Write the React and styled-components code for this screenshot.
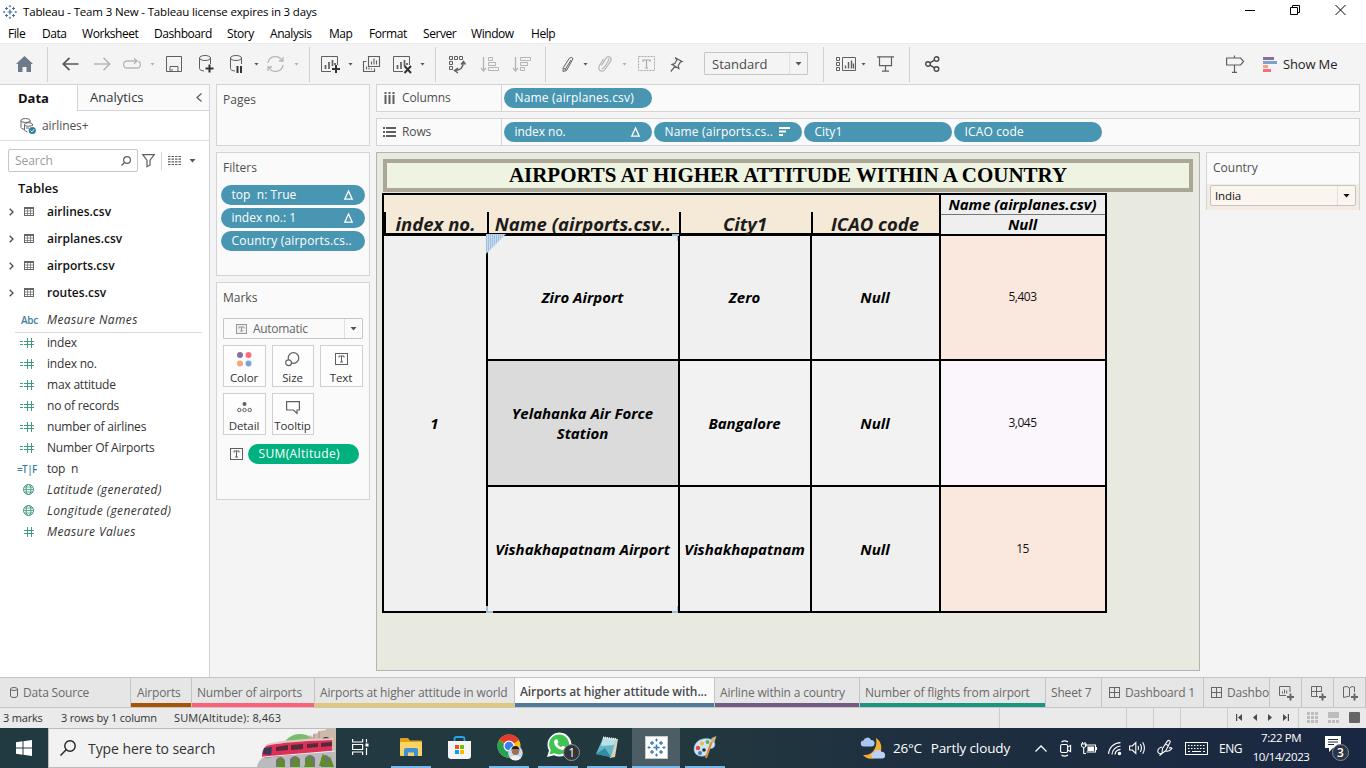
import React from "react";
import styled, { createGlobalStyle, css } from "styled-components";

const UI = `"Open Sans", "Noto Sans", sans-serif`;

const Global = createGlobalStyle`
  *, *::before, *::after { box-sizing: border-box; }
  body { margin: 0; background: #f4f4f4; overflow: hidden; }
  svg { display: block; flex: none; overflow: visible; }
`;

const Window = styled.div`
  width: 1366px;
  height: 768px;
  display: flex;
  flex-direction: column;
  overflow: hidden;
  background: #f4f4f4;
  font-family: ${UI};
  font-size: 12px;
  letter-spacing: -0.2px;
  color: #333;
  white-space: pre;
`;

/* ---------- title and menu ---------- */
const TitleBar = styled.div`
  height: 22px;
  display: flex;
  align-items: center;
  padding: 1px 20px 0 3px;
  background: #fff;
  color: #000;
  font-size: 11.5px;
  letter-spacing: -0.16px;
`;
const TitleText = styled.span`
  flex: 1;
  margin-left: 6px;
`;
const WindowButtons = styled.div`
  display: flex;
  align-items: center;
  gap: 35px;
  margin-top: -3px;
`;
const MenuBar = styled.div`
  height: 21px;
  display: flex;
  align-items: center;
  padding-left: 8px;
  padding-top: 2px;
  background: #fff;
  color: #000;
  font-size: 12px;
  letter-spacing: -0.44px;
`;
const MenuItem = styled.span`
  flex: none;
  width: ${(p) => p.$w}px;
`;

/* ---------- toolbar ---------- */
const Toolbar = styled.div`
  height: 41px;
  display: flex;
  align-items: center;
  border-top: 1px solid #ebebeb;
  background: #f4f4f4;
`;
const Tool = styled.span`
  flex: none;
  display: flex;
  margin-left: ${(p) => p.$gap}px;
`;
const ToolSeparator = styled.span`
  flex: none;
  width: 1px;
  height: 35px;
  margin-left: ${(p) => p.$gap}px;
  background: #d0d0d0;
`;
const Caret = styled.span`
  flex: none;
  width: ${(p) => p.$w || 5}px;
  height: ${(p) => (p.$w ? 4 : 3)}px;
  margin-left: ${(p) => p.$gap || 0}px;
  clip-path: polygon(0 0, 100% 0, 50% 100%);
  background: ${(p) => p.$c || "#555"};
`;
const FitSelect = styled.div`
  flex: none;
  display: flex;
  align-items: center;
  width: 104px;
  height: 23px;
  margin-left: 21px;
  margin-top: -1px;
  padding-left: 7px;
  border: 1px solid #c6c6c6;
  border-radius: 1px;
  font-size: 13px;
  letter-spacing: 0;
  color: #4a4a4a;
`;
const SelectArrow = styled.span`
  display: flex;
  align-items: center;
  justify-content: center;
  align-self: stretch;
  width: ${(p) => p.$w || 18}px;
  margin-left: auto;
  border-left: 1px solid #e0e0e0;
`;
const ShowMe = styled.span`
  margin: -1px 0 0 6px;
  font-size: 13px;
  letter-spacing: -0.15px;
  color: #222;
`;

/* ---------- body ---------- */
const Body = styled.div`
  height: 593px;
  display: flex;
`;
const DataPane = styled.aside`
  width: 210px;
  display: flex;
  flex-direction: column;
  border-right: 1px solid #d4d4d4;
  border-top: 1px solid #d4d4d4;
  background: #fff;
`;
const PaneTabs = styled.div`
  display: flex;
  height: 26px;
`;
const PaneTab = styled.div`
  display: flex;
  align-items: center;
  width: ${(p) => (p.$active ? 77 : 132)}px;
  padding-left: ${(p) => (p.$active ? 18 : 12)}px;
  padding-bottom: 1px;
  font-size: 13px;
  letter-spacing: 0;
  font-weight: ${(p) => (p.$active ? 700 : 400)};
  color: ${(p) => (p.$active ? "#111" : "#333")};
  ${(p) =>
    !p.$active &&
    css`
      background: #fafafa;
      border-left: 1px solid #d4d4d4;
      border-bottom: 1px solid #d4d4d4;
    `}
`;
const Collapse = styled.span`
  margin-left: 52px;
`;
const SourceRow = styled.div`
  display: flex;
  align-items: center;
  height: 30px;
  padding-left: 20px;
  border-bottom: 1px solid #dedede;
  gap: 6px;
  color: #4f4f4f;
  letter-spacing: -0.1px;
`;
const SearchRow = styled.div`
  display: flex;
  align-items: center;
  height: 23px;
  margin: 8px 0 0 8px;
`;
const SearchBox = styled.div`
  display: flex;
  align-items: center;
  justify-content: space-between;
  width: 130px;
  height: 23px;
  padding: 0 6px;
  border: 1px solid #c6c6c6;
  border-radius: 2px;
  color: #9b9b9b;
  letter-spacing: -0.05px;
`;
const TinyRule = styled.span`
  width: 1px;
  height: 18px;
  margin-left: 6px;
  background: #d4d4d4;
`;
const TablesHeading = styled.div`
  height: 26px;
  padding: 7px 0 0 18px;
  font-size: 13px;
  line-height: 18px;
  font-weight: 600;
  letter-spacing: 0;
  color: #111;
`;
const FieldRow = styled.div`
  display: flex;
  align-items: center;
  height: ${(p) => p.$h || 21}px;
  color: #333;
  font-weight: ${(p) => (p.$bold ? 600 : 400)};
  font-style: ${(p) => (p.$italic ? "italic" : "normal")};
  letter-spacing: ${(p) => (p.$bold ? 0 : p.$italic ? 0.4 : -0.2)}px;
  ${(p) => p.$bold && "color:#111;"}
`;
const FieldIcon = styled.span`
  display: flex;
  justify-content: flex-start;
  align-items: center;
  width: 47px;
  padding-left: ${(p) => p.$left}px;
`;
const AbcTag = styled.span`
  font-size: 10px;
  font-weight: 600;
  font-style: normal;
  letter-spacing: -0.3px;
  color: #3b7f9b;
`;
const TFTag = styled.span`
  font-size: 10px;
  font-weight: 600;
  letter-spacing: -0.6px;
  color: #3b7f9b;
`;
const FieldRule = styled.div`
  height: 1px;
  margin: -1px 7px -1px 15px;
  background: #dadada;
`;

/* ---------- cards ---------- */
const CardColumn = styled.div`
  width: 154px;
  margin-left: 6px;
  display: flex;
  flex-direction: column;
  gap: 6px;
`;
const Card = styled.section`
  height: ${(p) => p.$h}px;
  border: 1px solid #d4d4d4;
  background: #fafafa;
`;
const CardTitle = styled.div`
  height: ${(p) => p.$h || 32}px;
  padding: 6px 0 0 6px;
  line-height: 17px;
  letter-spacing: ${(p) => p.$ls || 0}px;
  color: #4f4f4f;
`;
const Pill = styled.div`
  display: flex;
  align-items: center;
  justify-content: space-between;
  width: ${(p) => p.$w}px;
  height: 20px;
  padding: 0 12px 1px 10.5px;
  border-radius: 10px;
  background: ${(p) => p.$c || "#4996b2"};
  color: #fff;
  font-weight: 500;
  letter-spacing: ${(p) => (p.$ls === undefined ? 0.18 : p.$ls)}px;
`;
const PillStack = styled.div`
  display: flex;
  flex-direction: column;
  gap: 3px;
  padding-left: 4px;
`;
const MarkType = styled.div`
  display: flex;
  align-items: center;
  width: 140px;
  height: 21px;
  margin: 3px 0 6px 6px;
  padding-left: 12px;
  gap: 6px;
  border: 1px solid #c6c6c6;
  border-radius: 1px;
  color: #666;
  letter-spacing: -0.3px;
`;
const MarkGrid = styled.div`
  display: grid;
  grid-template-columns: 43px 42px 43px;
  gap: 6px;
  padding-left: 6px;
`;
const MarkButton = styled.div`
  height: 42px;
  display: flex;
  flex-direction: column;
  align-items: center;
  justify-content: space-between;
  padding: 5px 1px 0 0;
  border: 1px solid #d0d0d0;
  background: #fdfdfd;
  font-size: 11.5px;
  line-height: 17px;
  letter-spacing: -0.1px;
`;
const MarkIcon = styled.span`
  height: 16px;
  display: flex;
  align-items: center;
`;
const EncodedField = styled.div`
  display: flex;
  align-items: center;
  gap: 5px;
  margin: 9px 0 0 13px;
`;

/* ---------- shelves and view ---------- */
const Main = styled.main`
  width: 984px;
  margin-left: 6px;
`;
const Shelf = styled.div`
  display: flex;
  align-items: center;
  height: 28px;
  margin-bottom: ${(p) => p.$mb}px;
  border: 1px solid #d4d4d4;
  background: #fafafa;
`;
const ShelfLabel = styled.div`
  display: flex;
  align-items: center;
  gap: 6px;
  width: 125px;
  height: 26px;
  padding: 0 0 1px 6px;
  border-right: 1px solid #d4d4d4;
  color: #4f4f4f;
  letter-spacing: -0.1px;
`;
const ShelfPills = styled.div`
  display: flex;
  gap: 2px;
  margin-left: 2px;
`;
const ViewRow = styled.div`
  display: flex;
  align-items: flex-start;
`;
const View = styled.div`
  width: 824px;
  height: 519px;
  padding: 6px 0 0 5px;
  border: 1px solid #b4b4b4;
  background: #e8e9df;
`;
const SheetTitle = styled.h1`
  width: 810px;
  height: 33px;
  margin: 0 0 1px 1px;
  border: 4px solid #aba797;
  background: #eef3e2;
  color: #000;
  text-align: center;
  font: bold 21px/25px "Liberation Serif", serif;
  letter-spacing: -0.03px;
`;
const Crosstab = styled.div`
  display: grid;
  width: 725px;
  grid-template-columns: 104px 192px 132px 129px 168px;
  grid-template-rows: 43px 125px 126px 126px;
  font: italic 700 15px/20px ${UI};
  letter-spacing: 0;
  color: #000;
`;
const HeaderBand = styled.div`
  grid-column: 1 / 5;
  display: grid;
  grid-template-columns: 103px 192px 132px 1fr;
  align-items: end;
  border: solid #000;
  border-width: 2px 0 3px 2px;
  background: #f5e9d8;
`;
const HeaderCell = styled.div`
  height: 21px;
  padding-right: 2px;
  border-left: 2px solid #000;
  text-align: center;
  font-size: 18.5px;
  line-height: 24px;
  color: #1c1c1c;
`;
const ColumnHeader = styled.div`
  display: flex;
  flex-direction: column;
  border: 2px solid #000;
  background: #efefef;
  text-align: center;
  letter-spacing: -0.05px;
`;
const ColumnHeaderLine = styled.div`
  height: ${(p) => p.$h}px;
  padding-right: 1px;
  line-height: 19px;
  ${(p) => p.$rule && "border-bottom: 1px solid #777;"}
`;
const Cell = styled.div`
  position: relative;
  display: flex;
  align-items: center;
  justify-content: center;
  padding: 0 1px 1px 0;
  border-left: 2px solid #000;
  border-bottom: 2px solid #000;
  background: ${(p) => p.$bg || "#f0f0f0"};
  text-align: center;
  line-height: 20px;
  ${(p) => p.$span && "grid-row: 2 / 5;"}
`;
const ValueCell = styled(Cell)`
  border-right: 2px solid #000;
  font: 12px/16px ${UI};
  letter-spacing: -0.5px;
  color: #111;
`;
const Handle = styled.i`
  position: absolute;
  width: 7px;
  height: 7px;
  border: 0 solid #9fbedb;
  ${(p) =>
    ({
      tr: "top:-2px; right:-1px; border-width:2px 2px 0 0;",
      bl: "bottom:-2px; left:-2px; border-width:0 0 2px 2px;",
      br: "bottom:-2px; right:-1px; border-width:0 2px 2px 0;",
    })[p.$at]}
`;
const Corner = styled.i`
  position: absolute;
  top: -2px;
  left: -2px;
  width: 20px;
  height: 20px;
  clip-path: polygon(0 0, 100% 0, 0 100%);
  background: repeating-linear-gradient(90deg, #9fbedb 0 1px, #c6dcf0 1px 2px);
`;
const CountryCard = styled.section`
  width: 154px;
  height: 58px;
  margin-left: 6px;
  border: 1px solid #d4d4d4;
  background: #fafafa;
`;
const CountryBody = styled.div`
  height: 26px;
  padding: 1px 3px;
  background: #f5ece1;
`;
const CountrySelect = styled.div`
  display: flex;
  align-items: center;
  height: 21px;
  padding-left: 4px;
  border: 1px solid #c4c4c4;
  border-radius: 2px;
  background: #faf5ee;
  font-size: 11.5px;
  letter-spacing: -0.1px;
  color: #111;
`;

/* ---------- sheet tabs, status ---------- */
const TabStrip = styled.div`
  display: flex;
  height: 31px;
  border-top: 1px solid #c4c4c4;
  border-bottom: 1px solid #c6c6c6;
  background: #e6e6e6;
`;
const SheetTab = styled.div`
  flex: none;
  display: flex;
  align-items: center;
  gap: 5px;
  overflow: hidden;
  width: ${(p) => p.$w}px;
  height: 29px;
  padding-left: ${(p) => (p.$pad === undefined ? 6 : p.$pad)}px;
  padding-bottom: ${(p) => (p.$active ? 2 : 0)}px;
  border-right: 1px solid #c4c4c4;
  background: ${(p) => (p.$active ? "#fafafa" : "#e6e6e6")};
  box-shadow: ${(p) => (p.$c ? `inset 0 -4px ${p.$c}` : "none")};
  color: ${(p) => (p.$active ? "#4a4a4a" : "#6a6a6a")};
  font-weight: ${(p) => (p.$active ? 600 : 400)};
  letter-spacing: ${(p) => (p.$active ? -0.1 : -0.17)}px;
`;
const StatusBar = styled.div`
  display: flex;
  height: 20px;
  padding-left: 3px;
  background: #eaeaea;
  font-size: 11px;
  line-height: 20px;
  letter-spacing: -0.2px;
  color: #333;
`;
const StatusText = styled.span`
  width: ${(p) => p.$w}px;
  letter-spacing: ${(p) => p.$ls || -0.2}px;
`;
const StatusCell = styled.div`
  width: ${(p) => p.$w}px;
  display: flex;
  align-items: center;
  border-left: 1px solid #cdcdcd;
  padding: 0 0 2px ${(p) => p.$pad || 0}px;
  gap: ${(p) => p.$gap || 0}px;
`;

/* ---------- taskbar ---------- */
const Taskbar = styled.div`
  display: flex;
  align-items: stretch;
  height: 40px;
  background: linear-gradient(90deg, #213a42 0, #22383f 50%, #1e2f40 68%, #1a2742 100%);
  color: #fff;
`;
const StartButton = styled.div`
  width: 48px;
  padding: 12px 0 0 16px;
`;
const TaskSearch = styled.div`
  display: flex;
  align-items: center;
  width: 288px;
  border: solid #b9bcbd;
  border-width: 1px 0 1px 1px;
  background: #f2f2f2;
  color: #333;
  font-size: 14px;
  letter-spacing: -0.08px;
  overflow: hidden;
`;
const TaskSearchText = styled.span`
  width: 141px;
  margin-left: 12px;
`;
const TaskApp = styled.div`
  flex: none;
  display: flex;
  align-items: center;
  justify-content: center;
  width: ${(p) => p.$w}px;
  margin-left: ${(p) => p.$gap || 0}px;
  background: ${(p) => (p.$active ? "#4c5d65" : "transparent")};
  border-bottom: 2px solid ${(p) => (p.$open ? "#76b9ed" : "transparent")};
`;
const TrayItem = styled.span`
  flex: none;
  display: flex;
  align-items: center;
  margin-left: ${(p) => p.$gap}px;
  font-size: ${(p) => p.$size || 12}px;
  letter-spacing: ${(p) => p.$ls || 0}px;
`;
const Clock = styled.div`
  width: 60px;
  margin-left: 9px;
  text-align: center;
  font-size: 11.5px;
  line-height: 19px;
  letter-spacing: -0.42px;
`;

/* ---------- drawings ---------- */
const Svg = ({ w, h, c = "#5f5f5f", sw = 1, children }) => (
  <svg width={w} height={h} viewBox={`0 0 ${w} ${h}`} fill="none" stroke={c} strokeWidth={sw}>
    {children}
  </svg>
);

const TableauMark = ({ size = 14, c = "#3f6f9a" }) => (
  <svg width={size} height={size} viewBox="0 0 14 14" stroke={c} strokeWidth="1" fill="none">
    <path d="M7 4.6v4.8M4.6 7h4.8" strokeWidth="1.2" />
    <path d="M3.5 2v3M2 3.5h3M10.500 2v3M9 3.500h3M3.500 9v3M2 10.500h3M10.500 9v3M9 10.500h3" />
    <path d="M7 0v2.400M5.800 1.200h2.400M7 11.600v2.400M5.800 12.800h2.400M1.200 5.800v2.400M0 7h2.400M12.800 5.800v2.400M11.600 7h2.400" strokeWidth=".8" />
  </svg>
);

const TextBox = ({ w = 13, h = 12, c = "#5f5f5f", fill = "none" }) => (
  <Svg w={w} h={h} c={c}>
    <rect x=".5" y=".5" width={w - 1} height={h - 1} fill={fill} />
    <path d={`M${w / 2 - 2.500} 4.500v-1.500h5v1.500M${w / 2} 3v${h - 6}M${w / 2 - 1.500} ${h - 3}h3`} />
  </Svg>
);

const Cylinder = ({ children }) => (
  <Svg w={15} h={18}>
    <ellipse cx="6" cy="3" rx="5.500" ry="2.500" />
    <path d="M.5 3v10.500c0 1.500 2 2.200 4.500 2.500M11.500 3v6" />
    {children}
  </Svg>
);

const ChartBox = ({ children, w = 20 }) => (
  <Svg w={w} h={19}>
    <path d="M16.500 10V1.500H.5v15h9.500" />
    <path d="M4.500 14v-4M8 14V7M11.500 11V5M14 10V8" strokeWidth="1.700" />
    {children}
  </Svg>
);

const Delta = () => (
  <Svg w={9} h={10} c="#fff" sw={1.3}>
    <path d="M4.500 1 8.200 9.200H.8Z" />
  </Svg>
);

const Chevron = () => (
  <Svg w={5} h={8} sw={1.3} c="#4a4a4a">
    <path d="M.7.7 4 4 .7 7.300" />
  </Svg>
);

const TableGlyph = () => (
  <Svg w={10} h={9} c="#666">
    <rect x=".5" y=".5" width="9" height="8" />
    <path d="M0 1.500h10" />
    <path d="M0 4h10M0 6.500h10M3.500 2v7M6.500 2v7" strokeWidth=".7" />
  </Svg>
);

const HashGlyph = ({ calc }) => (
  <Svg w={calc ? 15 : 11} h={10} c="#3f9c7c">
    {calc && <path d="M0 3.500h3M0 6.500h3" />}
    <g transform={calc ? "translate(4 0)" : ""}>
      <path d="M3.500 0v10M7.500 0v10M0 3.500h10M0 6.500h10" />
    </g>
  </Svg>
);

const GlobeGlyph = () => (
  <Svg w={11} h={11} c="#3f9c7c">
    <circle cx="5.500" cy="5.500" r="5" />
    <ellipse cx="5.500" cy="5.500" rx="2.400" ry="5" />
    <path d="M.5 5.500h10M1 3h9M1 8h9" strokeWidth=".8" />
  </Svg>
);

const DashGlyph = () => (
  <Svg w={11} h={11} c="#666">
    <rect x=".5" y=".5" width="10" height="10" />
    <path d="M5.500 0v11M0 5.500h11" />
  </Svg>
);

const Train = () => (
  <svg width="80" height="38" viewBox="0 0 80 38">
    <path d="M26 18c5-13 18-17 31-9l5 10z" fill="#76bd6c" />
    <path d="M50 14l4-8 3 2V5l5-1V2l8-1V0h10v38H50z" fill="#cdb9a8" />
    <path d="M58 5v10M63 3v12M54 8v8" stroke="#a99482" />
    <path d="M66 14V12a4 4 0 0 1 8 0v2z" fill="#3f3430" />
    <path d="M1 38c1-7 6-11 15-12l64-6v18z" fill="#b9bbbd" />
    <path d="M20 38V31q4-6 9 0v7zM34 38v-8q5-6 10 0v8zM49 38v-9q5-6 10 0v9zM65 38v-9q4-6 9 0v9z" fill="#6d7672" />
    <path d="M25 27l4 11h-8zM40 27l4 11h-8zM53 26l5 12H48zM67 24l4 13h-8zM74 27l4 11h-7z" fill="#5d8f22" />
    <path d="M6 27c0-7 3-11 10-12l60-5v12l-59 6c-7 1-11 1-11-1z" fill="#dc3155" />
    <path d="M11 15c15-4 35-5 66-6v2c-28 1-50 2-68 6z" fill="#e8c3ca" />
    <path d="M8 19l8-1-1 8-8-1z" fill="#2f3b58" />
    <path d="M20 18l12-2v5l-12 1zM35 16l12-1v5l-12 1zM51 15l11-1v4l-11 1zM65 14l11-1v4l-11 1z" fill="#56283c" />
    <path d="M7 28l72-6" stroke="#eef0f2" />
  </svg>
);

const TaskView = () => (
  <Svg w={17} h={16} c="#fff" sw={1.200}>
    <path d="M.6 0v3h10V0M.6 16v-3h10v3M.6 5.500h10v5H.6zM14.500 0v3.500M14.500 9v7" />
    <rect x="13.500" y="4.500" width="3" height="3" fill="#fff" stroke="none" />
  </Svg>
);

const Folder = () => (
  <svg width="22" height="19" viewBox="0 0 22 19">
    <path d="M0 1q0-1 1-1h7l2 2.500h11q1 0 1 1V17H0z" fill="#dfa318" />
    <rect y="4" width="22" height="14" rx=".8" fill="#fbd364" />
    <path d="M4 18v-6q0-2 2-2h10q2 0 2 2v6h-4v-3.500H8V18z" fill="#3b93d6" />
  </svg>
);

const Store = () => (
  <svg width="23" height="23" viewBox="0 0 23 23">
    <path d="M6.500 6V3q0-2 2-2h6q2 0 2 2v3" fill="none" stroke="#26a5e4" strokeWidth="1.800" />
    <path d="M0 5h23v15q0 3-3 3H3q-3 0-3-3z" fill="#f4f4f4" />
    <path d="M7 9h4v4H7z" fill="#f25022" />
    <path d="M12 9h4v4h-4z" fill="#7fba00" />
    <path d="M7 14h4v4H7z" fill="#00a4ef" />
    <path d="M12 14h4v4h-4z" fill="#ffb900" />
  </svg>
);

const Chrome = () => (
  <svg width="26" height="27" viewBox="0 0 26 27">
    <circle cx="12" cy="12" r="11.500" fill="#fbc116" />
    <path d="M2 6.200A11.500 11.500 0 0 1 22 6.200L12 7z" fill="#e33b2e" />
    <path d="M2 6.200A11.500 11.500 0 0 0 12 23.500L16 16z" fill="#23a455" />
    <path d="M2 6.200h20L12 12z" fill="#e33b2e" />
    <circle cx="12" cy="12" r="5.500" fill="#fff" />
    <circle cx="12" cy="12" r="4.300" fill="#3b7ded" />
    <circle cx="18.500" cy="19" r="7.300" fill="#c9dcea" />
    <path d="M13 24q5.500-5 11 0a7.300 7.300 0 0 1-11 0z" fill="#f0f1f3" />
    <circle cx="18.500" cy="17.500" r="3.600" fill="#a36e50" />
    <path d="M14.500 17q0-5 4-5t4 5l-1-2h-6z" fill="#251c1a" />
  </svg>
);

const WhatsApp = () => (
  <svg width="33" height="28" viewBox="0 0 33 28">
    <path d="M0 24l2-6.500A12 12 0 1 1 7 22.300z" fill="#fff" />
    <path d="M2.500 21.500l1.300-4.500A10 10 0 1 1 7.500 20.300z" fill="#3fc351" />
    <path d="M8.200 6.500l2-.3 1.300 3-1.200 1.600q1.300 2.500 4 3.500l1.400-1.600 2.800 1.400q0 3-3.500 3-7-1.500-8-7.600-.1-2 1.200-3z" fill="#fff" />
    <circle cx="24.500" cy="19.500" r="8" fill="#30363a" stroke="#8f9799" />
    <text x="24.500" y="24" textAnchor="middle" fontFamily="Open Sans, sans-serif" fontSize="12" fill="#fff">1</text>
  </svg>
);

const Notepad = () => (
  <svg width="23" height="23" viewBox="0 0 23 23">
    <path d="M7 1l15 2-3 18-5 1z" fill="#d7d2ba" />
    <path d="M7 2l13 1-5 18-15-3z" fill="#67b6c8" />
    <path d="M7 2l13 1-2 6-13 1z" fill="#b7e0e7" />
    <path d="M0 18l9-6 6 9z" fill="#2f8da6" />
    <path d="M7 1.500l13 1.500" stroke="#e8eff0" strokeWidth="2" strokeDasharray="1 1" />
  </svg>
);

const Paint = () => (
  <svg width="24" height="24" viewBox="0 0 24 24">
    <path d="M1 14C1 6 10 2 17 4c6 2 6 7 3 9-2 1-4 0-5 2s1 5-4 6C5 22 1 19 1 14z" fill="#cfe3f2" stroke="#7baed2" strokeWidth=".6" />
    <circle cx="5" cy="13" r="2.200" fill="#e2483e" />
    <circle cx="9" cy="8.500" r="2" fill="#eebc35" />
    <circle cx="14.500" cy="7" r="1.900" fill="#61af4c" />
    <circle cx="11" cy="15" r="1.800" fill="#233" />
    <circle cx="7" cy="18" r="2" fill="#3b7ec8" />
    <path d="M13 23 18.500 7" stroke="#dd8933" strokeWidth="2.200" />
    <path d="M18 8l.5-5 5-2-2 6z" fill="#cbb08a" />
  </svg>
);

const Weather = () => (
  <svg width="25" height="23" viewBox="0 0 25 23">
    <path d="M15 1c7 4 7 15 1 19-5 3-11 2-14-2 9 1 15-7 13-17z" fill="#f6ae31" />
    <path d="M3 9.500a3 3 0 0 1-.5-6 4 4 0 0 1 7.500-.5 3.300 3.300 0 0 1 1 6.500z" fill="#a9c5f2" />
    <path d="M13.500 21.500a3 3 0 0 1-.5-6 4.200 4.200 0 0 1 7.500-.7 3.400 3.400 0 0 1 1 6.700z" fill="#b9d0f7" />
  </svg>
);

/* ---------- data ---------- */
const MENU = [["File", 34], ["Data", 40], ["Worksheet", 72], ["Dashboard", 73], ["Story", 43], ["Analysis", 59], ["Map", 40], ["Format", 54], ["Server", 48], ["Window", 60], ["Help", 30]];
const TABLES = ["airlines.csv", "airplanes.csv", "airports.csv", "routes.csv"];
const CALCS = ["index", "index no.", "max attitude", "no of records", "number of airlines", "Number Of Airports"];
const AIRPORTS = [
  { name: "Ziro Airport", city: "Zero", value: "5,403", tint: "#fae8df" },
  { name: "Yelahanka Air Force\nStation", city: "Bangalore", value: "3,045", tint: "#fbf6fb", selected: true },
  { name: "Vishakhapatnam Airport", city: "Vishakhapatnam", value: "15", tint: "#fae8df" },
];
const GREY = "#b5b5b5";

function MainToolbar() {
  return (
    <Toolbar>
      <Tool $gap={16}><Svg w={17} h={16} c="none"><path d="M8.500 0 17 8h-2v8h-4.500v-5h-4v5H2V8H0z" fill="#6c7a89" /></Svg></Tool>
      <ToolSeparator $gap={14} />
      <Tool $gap={14}><Svg w={17} h={14} sw={1.700} c="#555"><path d="M16.500 7H1.500M7.500.8 1.300 7l6.200 6.200" /></Svg></Tool>
      <Tool $gap={15}><Svg w={17} h={14} sw={1.500} c={GREY}><path d="M0 7h15.500M9.500.8 15.700 7l-6.200 6.200" /></Svg></Tool>
      <Tool $gap={12}><Svg w={18} h={12} sw={1.300} c={GREY}><path d="M7 3H4Q.6 3 .6 6.500T4 10h10q3.400 0 3.400-3.500 0-2.500-2-3.300M7 3h7M11 .3 14 3l-3 2.800" /></Svg></Tool>
      <Caret $gap={9} $c="#b0b0b0" />
      <Tool $gap={11}><Svg w={16} h={16}><path d="M.5.5h15v15H.5zM4 15.500v-5h8v5M6 15v-2" /></Svg></Tool>
      <Tool $gap={17}><Cylinder><path d="M10.500 9.500v8M6.500 13.500h8" strokeWidth="2" stroke="#333" /></Cylinder></Tool>
      <Tool $gap={16}><Cylinder><path d="M7.500 11v7M11 11v7" strokeWidth="2" stroke="#333" /></Cylinder></Tool>
      <Caret $gap={9} />
      <Tool $gap={8}><Svg w={17} h={16} sw={1.300} c={GREY}><path d="M1 7A7.500 7.500 0 0 1 15 4.500M16 9A7.500 7.500 0 0 1 2 11.500M16 1v4h-4M1 15v-4h4" /></Svg></Tool>
      <Caret $gap={10} $c="#b0b0b0" />
      <ToolSeparator $gap={10} />
      <Tool $gap={11}><ChartBox><path d="M15 10v8M11 14h8" strokeWidth="2" stroke="#333" /></ChartBox></Tool>
      <Caret $gap={7} />
      <Tool $gap={10}><Svg w={17} h={16}><path d="M5.500.5h11v10h-11zM3.500 5.500H.5v10h11v-3M8.500 8.500v-3M11 8.500v-6M13.500 8.500v-4M3.500 13.500v-3M6 13.500v-2M8.500 13.500v-1" strokeWidth="1.100" /></Svg></Tool>
      <Tool $gap={13}><ChartBox><path d="m11.500 11 6.500 7M18 11l-6.500 7" strokeWidth="2" stroke="#333" /></ChartBox></Tool>
      <Caret $gap={7} />
      <ToolSeparator $gap={10} />
      <Tool $gap={13}><Svg w={17} h={17}><path d="M.5.5h3v3h-3zM5.500.5h3v3h-3zM10.500.5h3v3h-3zM.5 5.500h3v3h-3zM.5 10.500h3v3h-3z" /><path d="M6 14.500q8 0 8.500-8.500M12 8.500l2.500-3 2 3M9 12l-3.500 2.500L9 17" strokeWidth="1.400" /></Svg></Tool>
      <Tool $gap={15}><Svg w={18} h={15} c={GREY}><path d="M2.500 0v14M0 11l2.500 3L5 11" strokeWidth="1.300" /><path d="M7.500.5h4v3h-4zM7.500 5.500h7v3h-7zM7.500 10.500h10v3h-10z" /></Svg></Tool>
      <Tool $gap={14}><Svg w={18} h={15} c={GREY}><path d="M2.500 0v14M0 11l2.500 3L5 11" strokeWidth="1.300" /><path d="M7.500.5h10v3h-10zM7.500 5.500h7v3h-7zM7.500 10.500h4v3h-4z" /></Svg></Tool>
      <ToolSeparator $gap={14} />
      <Tool $gap={16}><Svg w={12} h={15}><path d="M7.500 1q2-1.500 3.500.7L4.500 13.500 1 14.500l.2-3.700zM1.500 11l3 2M9 3 3.200 12.500" /></Svg></Tool>
      <Caret $gap={9} />
      <Tool $gap={10}><Svg w={14} h={16} c={GREY} sw={1.200}><path d="M3.500 9.500 8 2.200q2-2.500 4-1t.6 4L7 13.500q-2 2.500-4.500 1.200T1.300 10L5.500 3M3.800 12q1.500 1 2.600-.8L10.500 4.500q.6-1.500-.5-2" /></Svg></Tool>
      <Caret $gap={10} $c="#b0b0b0" />
      <Tool $gap={11}><Svg w={17} h={16} c="#a8a8a8"><rect x=".5" y=".5" width="16" height="14" strokeDasharray="2 1" /><path d="M5 6V4h7v2M8.500 4v8M7 12h3" strokeWidth="1.200" /></Svg></Tool>
      <Tool $gap={15}><Svg w={13} h={15} sw={1.200}><path d="M5.200.7 12 4.600l-1.500.3-2.300 3.800.7 2.700L2 7.400l2.700-.7L7 2.900zM5 9.300.8 14.500" /></Svg></Tool>
      <FitSelect>Standard<SelectArrow><Caret $w={7} /></SelectArrow></FitSelect>
      <ToolSeparator $gap={15} />
      <Tool $gap={12}><Svg w={20} h={14}><path d="M.5.500h3v3h-3zM.5 5.500h3v3h-3zM.5 10.500h3v3h-3zM6.500.5h13v13h-13z" /><path d="M9.500 11.500v-3M12.500 11.500V5M15.500 11.500V3.500M17.500 11.500v-5" strokeWidth="1.400" /></Svg></Tool>
      <Caret $gap={5} />
      <Tool $gap={11}><Svg w={17} h={16} sw={1.200}><path d="M0 .8h17M2.500 1v8.700h12V1M8.500 10v5M5 15.200h7" /></Svg></Tool>
      <ToolSeparator $gap={15} />
      <Tool $gap={15}><Svg w={15} h={16} sw={1.400} c="#4a4a4a"><circle cx="3" cy="8" r="2.300" /><circle cx="11.500" cy="3" r="2.300" /><circle cx="11.500" cy="13" r="2.300" /><path d="m5 6.800 4.500-2.600M5 9.200l4.500 2.600" /></Svg></Tool>
      <Tool $gap={286}><Svg w={18} h={18} sw={1.200}><path d="M.6 3h14l3 3.500-3 3.500H.6zM8.500.5V3M8.500 10v7.400M6 17.400h5" /></Svg></Tool>
      <Tool $gap={19}><Svg w={14} h={15} c="none"><path d="M0 0h11v3H0z" fill="#8a6f98" /><path d="M0 4h14v3H0z" fill="#7ba3d0" /><path d="M0 8h5v3H0z" fill="#f4a478" /><path d="M0 12h8v3H0z" fill="#fb6b80" /></Svg></Tool>
      <ShowMe>Show Me</ShowMe>
    </Toolbar>
  );
}

function DataPanel() {
  return (
    <DataPane>
      <PaneTabs>
        <PaneTab $active>Data</PaneTab>
        <PaneTab>
          Analytics
          <Collapse><Svg w={6} h={9} sw={1.300}><path d="M5.500.5 1 4.500l4.500 4" /></Svg></Collapse>
        </PaneTab>
      </PaneTabs>
      <SourceRow>
        <Svg w={16} h={16} c="#666">
          <ellipse cx="5.500" cy="2.500" rx="4.500" ry="2" />
          <path d="M1 2.500v7q.5 1.500 3 1.800M10 2.500v2" />
          <ellipse cx="8.500" cy="6.500" rx="4" ry="1.800" />
          <path d="M4.500 6.500v5.500q.5 1.500 3 2M12.500 6.500V8M6 10h3" />
          <circle cx="12.300" cy="12.500" r="3.600" fill="#2f7f9e" stroke="none" />
          <path d="m10.600 12.600 1.300 1.300 2.200-2.600" stroke="#fff" />
        </Svg>
        airlines+
      </SourceRow>
      <SearchRow>
        <SearchBox>
          Search
          <Svg w={10} h={10} sw={1.200}><circle cx="6" cy="4" r="3.400" /><path d="M3.500 6.500.5 9.500" /></Svg>
        </SearchBox>
        <Tool $gap={4}><Svg w={13} h={13} sw={1.200}><path d="M.7.700h11.600L8 6.200V11l-3 1.700V6.200z" /></Svg></Tool>
        <TinyRule />
        <Tool $gap={6}><Svg w={13} h={9}><path d="M0 .5h13M0 3.200h13M0 5.900h13M0 8.500h13" strokeWidth="1.200" strokeDasharray="2.500 1" /></Svg></Tool>
        <Caret $gap={8} $w={7} />
      </SearchRow>
      <TablesHeading>Tables</TablesHeading>
      {TABLES.map((t) => (
        <FieldRow key={t} $bold $h={27}>
          <FieldIcon $left={9}><Chevron /><Tool $gap={10}><TableGlyph /></Tool></FieldIcon>
          {t}
        </FieldRow>
      ))}
      <FieldRow $italic $h={27}><FieldIcon $left={21}><AbcTag>Abc</AbcTag></FieldIcon>Measure Names</FieldRow>
      <FieldRule />
      {CALCS.map((f) => (
        <FieldRow key={f}><FieldIcon $left={20}><HashGlyph calc /></FieldIcon>{f}</FieldRow>
      ))}
      <FieldRow><FieldIcon $left={17}><TFTag>=T|F</TFTag></FieldIcon>top  n</FieldRow>
      <FieldRow $italic><FieldIcon $left={23}><GlobeGlyph /></FieldIcon>Latitude (generated)</FieldRow>
      <FieldRow $italic><FieldIcon $left={23}><GlobeGlyph /></FieldIcon>Longitude (generated)</FieldRow>
      <FieldRow $italic><FieldIcon $left={24}><HashGlyph /></FieldIcon>Measure Values</FieldRow>
    </DataPane>
  );
}

function Cards() {
  return (
    <CardColumn>
      <Card $h={62}><CardTitle>Pages</CardTitle></Card>
      <Card $h={124}>
        <CardTitle>Filters</CardTitle>
        <PillStack>
          <Pill $w={144} $ls={0.05}>top  n: True<Delta /></Pill>
          <Pill $w={144} $ls={-0.02}>index no.: 1<Delta /></Pill>
          <Pill $w={144}>Country (airports.cs..</Pill>
        </PillStack>
      </Card>
      <Card $h={218}>
        <CardTitle>Marks</CardTitle>
        <MarkType>
          <TextBox w={11} h={10} c="#999" fill="#eee" />Automatic
          <SelectArrow><Caret $w={7} /></SelectArrow>
        </MarkType>
        <MarkGrid>
          <MarkButton>
            <MarkIcon><Svg w={15} h={15} c="none"><circle cx="3" cy="3" r="3" fill="#85719a" /><circle cx="11.500" cy="3" r="3" fill="#fb6b80" /><circle cx="3" cy="11.500" r="3" fill="#f4a478" /><circle cx="11.500" cy="11.500" r="3" fill="#7ba3d0" /></Svg></MarkIcon>Color
          </MarkButton>
          <MarkButton>
            <MarkIcon><Svg w={15} h={15} sw={1.200}><circle cx="8.500" cy="6" r="5.300" /><circle cx="3.600" cy="10.700" r="2.900" fill="#fdfdfd" /></Svg></MarkIcon>Size
          </MarkButton>
          <MarkButton><MarkIcon><TextBox /></MarkIcon>Text</MarkButton>
          <MarkButton>
            <MarkIcon><Svg w={15} h={12}><circle cx="7.500" cy="3" r="2" fill="#5f5f5f" stroke="none" /><circle cx="2.300" cy="9" r="1.700" /><circle cx="7.500" cy="9" r="1.700" /><circle cx="12.700" cy="9" r="1.700" /></Svg></MarkIcon>Detail
          </MarkButton>
          <MarkButton>
            <MarkIcon><Svg w={14} h={13} sw={1.200}><path d="M.6.600h12.800v8.400H11v3.400L7.500 9H.6z" /></Svg></MarkIcon>Tooltip
          </MarkButton>
        </MarkGrid>
        <EncodedField><TextBox /><Pill $w={111} $c="#00b180" $ls={0.35}>SUM(Altitude)</Pill></EncodedField>
      </Card>
    </CardColumn>
  );
}

function SheetView() {
  return (
    <View>
      <SheetTitle>AIRPORTS AT HIGHER ATTITUDE WITHIN A COUNTRY</SheetTitle>
      <Crosstab>
        <HeaderBand>
          <HeaderCell>index no.</HeaderCell>
          <HeaderCell>Name (airports.csv..</HeaderCell>
          <HeaderCell>City1</HeaderCell>
          <HeaderCell>ICAO code</HeaderCell>
        </HeaderBand>
        <ColumnHeader>
          <ColumnHeaderLine $h={20} $rule>Name (airplanes.csv)</ColumnHeaderLine>
          <ColumnHeaderLine $h={19}>Null</ColumnHeaderLine>
        </ColumnHeader>
        <Cell $span>1</Cell>
        {AIRPORTS.map((a, i) => (
          <React.Fragment key={a.name}>
            <Cell $bg={a.selected ? "#dbdbdb" : undefined}>
              {i === 0 && <><Corner /><Handle $at="tr" /></>}
              {i === 2 && <><Handle $at="bl" /><Handle $at="br" /></>}
              {a.name}
            </Cell>
            <Cell $bg={a.selected ? "#f2f2f2" : undefined}>{a.city}</Cell>
            <Cell $bg={a.selected ? "#f2f2f2" : undefined}>Null</Cell>
            <ValueCell $bg={a.tint}>{a.value}</ValueCell>
          </React.Fragment>
        ))}
      </Crosstab>
    </View>
  );
}

function Workspace() {
  return (
    <Main>
      <Shelf $mb={6}>
        <ShelfLabel>
          <Svg w={13} h={12} sw={2}><path d="M2.500 0v2M6.500 0v2M10.500 0v2M2.500 3v9M6.500 3v9M10.500 3v9" /></Svg>Columns
        </ShelfLabel>
        <ShelfPills><Pill $w={148}>Name (airplanes.csv)</Pill></ShelfPills>
      </Shelf>
      <Shelf $mb={6}>
        <ShelfLabel>
          <Svg w={13} h={10} sw={2}><path d="M0 1h2M0 5h2M0 9h2M3 1h10M3 5h10M3 9h10" /></Svg>Rows
        </ShelfLabel>
        <ShelfPills>
          <Pill $w={148} $ls={-0.05}>index no.<Delta /></Pill>
          <Pill $w={148}>Name (airports.cs..<Svg w={11} h={9} c="#fff" sw={1.800}><path d="M0 1h11M0 4.500h7M0 8h4" /></Svg></Pill>
          <Pill $w={148} $ls={0}>City1</Pill>
          <Pill $w={148} $ls={0.15}>ICAO code</Pill>
        </ShelfPills>
      </Shelf>
      <ViewRow>
        <SheetView />
        <CountryCard>
          <CardTitle $h={31}>Country</CardTitle>
          <CountryBody><CountrySelect>India<SelectArrow><Caret $w={7} $c="#111" /></SelectArrow></CountrySelect></CountryBody>
        </CountryCard>
      </ViewRow>
    </Main>
  );
}

function Tabs() {
  const plus = <path d="M11.500 7.500v7M8 11h7" strokeWidth="2" />;
  return (
    <TabStrip>
      <SheetTab $w={131} $pad={10}>
        <Svg w={8} h={11} c="#666"><ellipse cx="4" cy="2" rx="3.500" ry="1.500" /><path d="M.5 2v7q0 1.500 3.500 1.500T7.500 9V2" /></Svg>{" "}Data Source
      </SheetTab>
      <SheetTab $w={61} $c="#a85204">Airports</SheetTab>
      <SheetTab $w={123} $c="#fc6179" $pad={5}>Number of airports</SheetTab>
      <SheetTab $w={200} $c="#dfc777" $pad={5}>Airports at higher attitude in world</SheetTab>
      <SheetTab $w={200} $c="#50799c" $pad={5} $active>Airports at higher attitude with...</SheetTab>
      <SheetTab $w={145} $c="#735a82" $pad={5}>Airline within a country</SheetTab>
      <SheetTab $w={186} $c="#1a9580" $pad={5}>Number of flights from airport</SheetTab>
      <SheetTab $w={56} $pad={5}>Sheet 7</SheetTab>
      <SheetTab $w={102} $pad={7}><DashGlyph />Dashboard 1</SheetTab>
      <SheetTab $w={66} $pad={7}><DashGlyph />Dashbo</SheetTab>
      <SheetTab $w={32} $pad={9}><Svg w={15} h={14} c="#666"><path d="M7 9.500H.5v-9h10.500V6M3.500 7.500v-2M5.500 7.500v-4M7.700 7.500v-3" />{plus}</Svg></SheetTab>
      <SheetTab $w={32} $pad={9}><Svg w={15} h={14} c="#666"><path d="M7 10.500H.5V.5h10V6M5.500.5v10M.5 5.500h10" />{plus}</Svg></SheetTab>
      <SheetTab $w={32} $pad={9}><Svg w={15} h={14} c="#666"><path d="M7 10 .5 11.500V1L4 .5 6.500 2 9 .5l2.500.5v5M6.500 2v8" />{plus}</Svg></SheetTab>
    </TabStrip>
  );
}

function Status() {
  return (
    <StatusBar>
      <StatusText $w={58}>3 marks</StatusText>
      <StatusText $w={113}>3 rows by 1 column</StatusText>
      <StatusText $w={825} $ls={0.15}>SUM(Altitude): 8,463</StatusText>
      <StatusCell $w={127} />
      <StatusCell $w={27} />
      <StatusCell $w={27} />
      <StatusCell $w={47} />
      <StatusCell $w={71} $pad={8} $gap={11}>
        <Svg w={6} h={7} c="none"><path d="M0 0h1.200v7H0zM6 0v7L2 3.500z" fill="#4a4a4a" /></Svg>
        <Svg w={4} h={7} c="none"><path d="M4 0v7L0 3.500z" fill="#4a4a4a" /></Svg>
        <Svg w={4} h={7} c="none"><path d="M0 0v7l4-3.500z" fill="#4a4a4a" /></Svg>
        <Svg w={6} h={7} c="none"><path d="M6 0H4.800v7H6zM0 0v7l4-3.500z" fill="#4a4a4a" /></Svg>
      </StatusCell>
      <StatusCell $w={68} $pad={8} $gap={10}>
        <Svg w={11} h={11} c="none"><path d="M0 0h3v3H0zM4 0h3v3H4zM8 0h3v3H8zM0 4h3v3H0zM4 4h3v3H4zM8 4h3v3H8zM0 8h3v3H0zM4 8h3v3H4zM8 8h3v3H8z" fill="#bdbdbd" /></Svg>
        <Svg w={11} h={11} c="none"><path d="M0 0h11v6H0zM0 8h3v3H0zM4 8h3v3H4zM8 8h3v3H8z" fill="#bdbdbd" /></Svg>
        <Svg w={11} h={11} c="none"><rect width="11" height="11" rx="1" fill="#666" /></Svg>
      </StatusCell>
    </StatusBar>
  );
}

function Task() {
  return (
    <Taskbar>
      <StartButton><Svg w={16} h={16} c="none"><path d="M0 2.300 6.500 1.300v6.200H0zM7.500 1.200 16 0v7.500H7.500zM0 8.500h6.500v6.200L0 13.700zM7.500 8.500H16V16l-8.500-1.200z" fill="#fff" /></Svg></StartButton>
      <TaskSearch>
        <Tool $gap={11}><Svg w={16} h={16} sw={1.400} c="#222"><circle cx="10" cy="6" r="5.200" /><path d="M6.200 9.800.5 15.500" /></Svg></Tool>
        <TaskSearchText>Type here to search</TaskSearchText>
        <Tool $gap={27}><Train /></Tool>
      </TaskSearch>
      <TaskApp $w={48}><TaskView /></TaskApp>
      <TaskApp $w={40} $gap={7} $open><Folder /></TaskApp>
      <TaskApp $w={40} $gap={8}><Store /></TaskApp>
      <TaskApp $w={40} $gap={10} $open><Tool $gap={2}><Chrome /></Tool></TaskApp>
      <TaskApp $w={40} $gap={9} $open><Tool $gap={11}><WhatsApp /></Tool></TaskApp>
      <TaskApp $w={40} $gap={9} $open><Notepad /></TaskApp>
      <TaskApp $w={48} $gap={5} $open $active>
        <svg width="23" height="23" viewBox="0 0 23 23"><rect x=".5" y=".5" width="22" height="22" fill="#fff" stroke="#c9c9c9" /><g transform="translate(2.500 2.500)"><TableauMark size={18} c="#3e7cab" /></g></svg>
      </TaskApp>
      <TaskApp $w={40} $gap={5} $open><Paint /></TaskApp>
      <TrayItem $gap={136}><Weather /></TrayItem>
      <TrayItem $gap={7} $size={13.5} $ls={-0.25}>26°C</TrayItem>
      <TrayItem $gap={9} $size={13.5} $ls={-0.12}>Partly cloudy</TrayItem>
      <TrayItem $gap={25}><Svg w={12} h={7} c="#fff" sw={1.300}><path d="m.5 6.500 5.500-5.500 5.500 5.500" /></Svg></TrayItem>
      <TrayItem $gap={13}><Svg w={11} h={17} c="#fff" sw={1.100}><rect x=".6" y="4.500" width="7" height="8" rx="1.500" /><path d="m7.600 7 3-1.500v6l-3-1.500M1.500 2q3-2.200 6.500 0M1.500 15q3 2.200 6.500 0" /></Svg></TrayItem>
      <TrayItem $gap={10}><Svg w={16} h={12} c="#fff" sw={1.100}><path d="M4.500 4.500V3h10v7h-9M1.500 0v2M4 0v2M.5 2h4.500v2q-2.200 3-4.500 0zM2.700 6v5.500H5M15.500 5v3" /><path d="M7 5h5.500v3.500H7z" fill="#fff" /></Svg></TrayItem>
      <TrayItem $gap={11}><Svg w={13} h={13} c="#fff" sw={1.200}><path d="M.6 12A12 12 0 0 1 12.500.6M4 12.500A9 9 0 0 1 12.500 4M7 12.500a6 6 0 0 1 5.500-5.200" /><circle cx="11.500" cy="11.500" r="1.200" fill="#fff" /></Svg></TrayItem>
      <TrayItem $gap={8}><Svg w={17} h={14} c="#fff" sw={1.100}><path d="M.6 5h2.700l3.500-3.500v11L3.300 9H.6zM9 5q1.200 2 0 4M11.300 3q2.300 4 0 8M13.700 1.200q3.500 5.800 0 11.600" /></Svg></TrayItem>
      <TrayItem $gap={11}><Svg w={16} h={16} c="#fff" sw={1.100}><path d="M5.500 8.500 10.500 1q2-1.500 2.800.7L9 10.500l-4 3zM8.500 4l3.500 2M5 7Q1 8 .8 11T5 13.500M5 13.500l-2.500 2M8.500 11q4 1 6.500-2.500-1.500-1.500-3-.3" /></Svg></TrayItem>
      <TrayItem $gap={12}><Svg w={23} h={13} c="#fff"><rect x=".5" y=".5" width="22" height="12" /><path d="M3 3.500h17M3 6.500h17" strokeDasharray="1.500 1.500" /><path d="M3 9.500h2M7 9.500h9M18 9.500h2" /></Svg></TrayItem>
      <TrayItem $gap={11} $size={12} $ls={-0.5}>ENG</TrayItem>
      <Clock>7:22 PM<br />10/14/2023</Clock>
      <TrayItem $gap={14}>
        <svg width="24" height="26" viewBox="0 0 24 26">
          <path d="M0 1h16v12H8l-4 4v-4H0z" fill="#fff" />
          <path d="M3 4.500h10M3 7h10M3 9.500h6" stroke="#1c2a42" />
          <circle cx="15.500" cy="17.500" r="8" fill="#2d3443" stroke="#838a97" />
          <text x="15.500" y="22" textAnchor="middle" fontFamily="Open Sans, sans-serif" fontWeight="600" fontSize="12" fill="#fff">3</text>
        </svg>
      </TrayItem>
    </Taskbar>
  );
}

export default function App() {
  return (
    <Window>
      <Global />
      <TitleBar>
        <TableauMark size={14} />
        <TitleText>Tableau - Team 3 New - Tableau license expires in 3 days</TitleText>
        <WindowButtons>
          <Svg w={10} h={10} c="#000"><path d="M0 5.500h10" /></Svg>
          <Svg w={10} h={10} c="#000"><path d="M.5 2.500h7v7h-7zM2.500 2V.5h7v7H8" /></Svg>
          <Svg w={11} h={10} c="#000"><path d="m.5 0 10 10M10.500 0l-10 10" /></Svg>
        </WindowButtons>
      </TitleBar>
      <MenuBar>{MENU.map(([m, w]) => <MenuItem key={m} $w={w}>{m}</MenuItem>)}</MenuBar>
      <MainToolbar />
      <Body>
        <DataPanel />
        <Cards />
        <Workspace />
      </Body>
      <Tabs />
      <Status />
      <Task />
    </Window>
  );
}
